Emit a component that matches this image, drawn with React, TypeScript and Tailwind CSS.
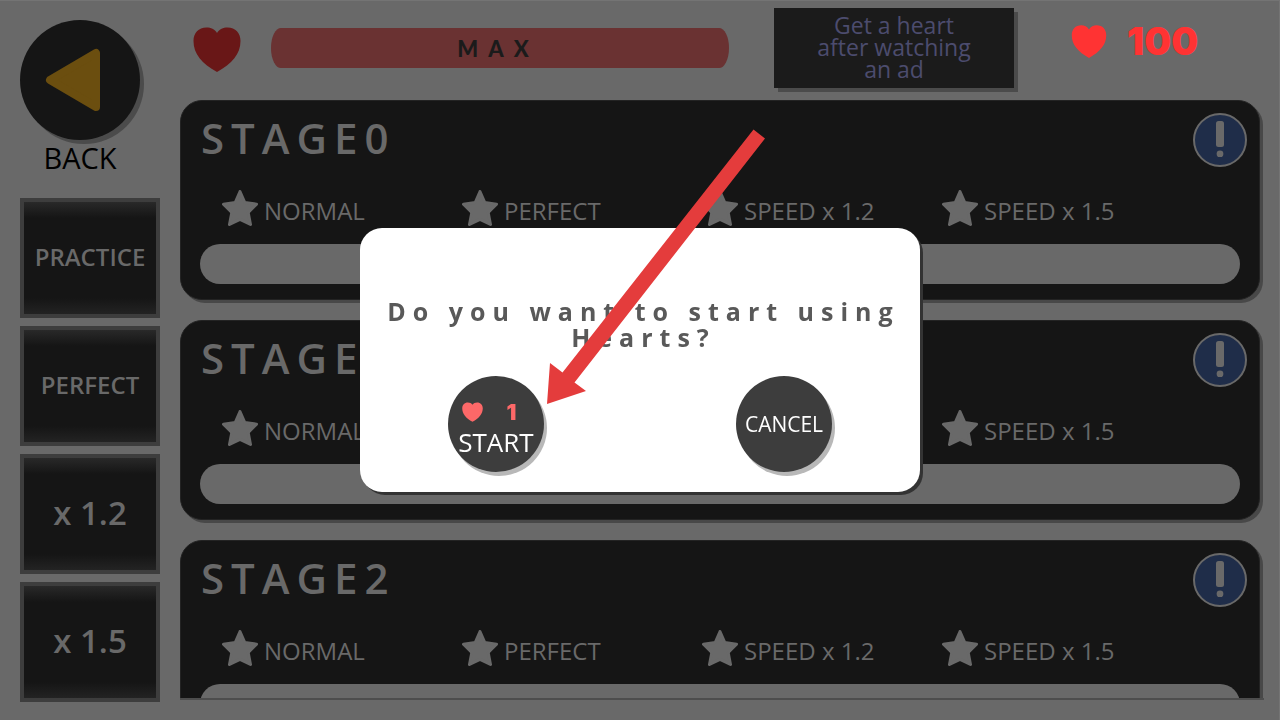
import { useState } from "react";

const modes = [
  { label: "PRACTICE", size: "text-[24px]" },
  { label: "PERFECT", size: "text-[24px]" },
  { label: "x 1.2", size: "text-[33px]" },
  { label: "x 1.5", size: "text-[33px]" },
];

const goals = ["NORMAL", "PERFECT", "SPEED x 1.2", "SPEED x 1.5"];

const stages = ["STAGE0", "STAGE1", "STAGE2"];

function Heart({ className }: { className: string }) {
  return (
    <svg viewBox="0 0 48 45" className={className} fill="currentColor">
      <path d="M24 6C21.500 2 18 .5 13.500 .5 5.500 .5 .5 6 .5 14 .5 27 9 36.500 24 45 39 36.500 47.500 27 47.500 14 47.500 6 42.500 .5 34.500 .5 30 .5 26.500 2 24 6Z" />
    </svg>
  );
}

function Star() {
  return (
    <svg
      viewBox="0 0 36 36"
      className="size-9 shrink-0"
      fill="currentColor"
      stroke="currentColor"
      strokeWidth="3"
      strokeLinejoin="round"
    >
      <path d="M18 1.500 22.800 12.500 34.500 14.200 26.200 22.500 28.500 34.500 18 29.300 7.500 34.500 9.800 22.500 1.500 14.200 13.200 12.500Z" />
    </svg>
  );
}

function Sidebar() {
  return (
    <nav className="flex w-[140px] shrink-0 flex-col pt-5">
      <button
        aria-labelledby="back-label"
        className="flex size-[120px] cursor-pointer items-center justify-center rounded-full bg-[#151515] shadow-[4px_4px_0_#4b4b4b]"
      >
        <svg
          viewBox="0 0 56 64"
          className="mr-3.5 h-16 w-14"
          fill="#6b4e0f"
          stroke="#6b4e0f"
          strokeWidth="8"
          strokeLinejoin="round"
        >
          <path d="M5 32 51 5V59Z" />
        </svg>
      </button>
      <span
        id="back-label"
        className="w-[120px] text-center text-[29px] leading-9 text-black"
      >
        BACK
      </span>

      <div className="mt-[22px] flex flex-col gap-2">
        {modes.map((mode) => (
          <button
            key={mode.label}
            className={`flex h-[120px] cursor-pointer flex-col items-center justify-between border-4 border-[#3d3d3d] bg-[#151515] font-semibold ${mode.size}`}
          >
            <span className="h-4 w-full bg-linear-to-b from-[#292929] to-[#151515]" />
            <span className="pb-0.5 leading-8">{mode.label}</span>
            <span className="h-4 w-full bg-linear-to-t from-[#232323] to-[#151515]" />
          </button>
        ))}
      </div>
    </nav>
  );
}

function Header() {
  return (
    <header className="flex h-[100px] shrink-0 items-center pr-[62px] pb-1 pl-[13px]">
      <Heart className="mt-0.5 h-[45px] w-12 text-[#691717]" />
      <div
        role="progressbar"
        aria-label="Hearts"
        aria-valuenow={100}
        className="ml-[30px] flex h-10 flex-1 items-center justify-center rounded-[10px/20px] bg-[#6a3232] pr-1 font-['Lato'] text-[22px] font-black tracking-[10px] text-[#1b1b1b]"
      >
        MAX
      </div>
      <button className="ml-[45px] h-20 w-60 cursor-pointer bg-[#1b1b1b] px-8 pb-0.5 text-[23px] leading-[22px] text-[#4c4c6e] shadow-[4px_4px_0_#4b4b4b]">
        Get a heart after watching an ad
      </button>
      <div className="ml-[57px] flex items-center gap-5 pb-3.5 text-[#ff3333]">
        <Heart className="h-[33px] w-9" />
        <span className="w-[75px] font-['Inter'] text-[38px] leading-8 font-black">
          100
        </span>
      </div>
    </header>
  );
}

function StageCard({ name }: { name: string }) {
  return (
    <section className="rounded-[22px] border border-[#232323] bg-[#151515] shadow-[3px_3px_0_#484848]">
      <div className="flex items-start justify-between pt-3 pr-3 pl-5">
        <h2 className="text-[42px] leading-[50px] font-semibold tracking-[7px]">
          {name}
        </h2>
        <button
          aria-label={`${name} info`}
          className="flex size-[54px] cursor-pointer items-center justify-center rounded-full border-2 border-[#696969] bg-[#1f2d49] pb-0.5"
        >
          <svg viewBox="0 0 8 36" className="h-9 w-2" fill="#696969">
            <rect width="8" height="26" rx="2.500" />
            <circle cx="4" cy="33" r="3.400" />
          </svg>
        </button>
      </div>
      <ul className="mt-[23px] grid grid-cols-4 pr-[77px] pl-[41px]">
        {goals.map((goal) => (
          <li key={goal} className="flex items-end gap-1.5">
            <Star />
            <span className="text-[24px] leading-[30px] font-medium whitespace-nowrap">
              {goal}
            </span>
          </li>
        ))}
      </ul>
      <div
        role="progressbar"
        aria-label={`${name} progress`}
        aria-valuenow={0}
        className="mx-[19px] mt-[18px] mb-[15px] h-10 rounded-[20px] bg-[#696969]"
      />
    </section>
  );
}

function StartDialog({ onClose }: { onClose: () => void }) {
  return (
    <div className="fixed inset-0 flex items-center justify-center">
      <div
        role="dialog"
        aria-labelledby="dialog-title"
        className="relative h-[264px] w-[560px] rounded-[22px] bg-white pt-[70px] shadow-[3px_3px_0_#333333]"
      >
        <p
          id="dialog-title"
          className="pl-[7px] text-center text-[25px] leading-[26px] font-bold tracking-[7px] text-[#595959]"
        >
          Do you want to start using Hearts?
        </p>
        <div className="mt-[26px] flex justify-center gap-48">
          <button
            onClick={onClose}
            className="flex size-24 cursor-pointer flex-col items-center rounded-full bg-[#3d3d3d] pt-6 text-white shadow-[3px_4px_0_#b8b8b8]"
          >
            <span className="flex items-center gap-6 pr-3.5 text-[#fd6868]">
              <Heart className="h-5 w-[21px]" />
              <span className="font-['Inter'] text-[22px] leading-6 font-black">
                1
              </span>
            </span>
            <span className="text-[26px] leading-9">START</span>
          </button>
          <button
            onClick={onClose}
            className="flex size-24 cursor-pointer items-center justify-center rounded-full bg-[#3d3d3d] pt-0.5 text-[21px] text-white shadow-[3px_4px_0_#b8b8b8]"
          >
            CANCEL
          </button>
        </div>

        {/* pointer to the start button */}
        <svg
          viewBox="0 0 218 275"
          className="pointer-events-none absolute -top-[99px] left-[187px] h-[275px] w-[218px]"
          fill="#e43c3c"
        >
          <path d="M0 275 3 234 15.500 243.500 206.500 .5 218 9.500 27.500 253.500 39 262Z" />
        </svg>
      </div>
    </div>
  );
}

export default function App() {
  const [open, setOpen] = useState(true);

  return (
    <div className="flex h-screen gap-5 overflow-hidden bg-[#696969] pl-5 font-['Open_Sans',sans-serif] text-[#696969] shadow-[inset_-1px_1px_0_#747474]">
      <Sidebar />
      <main className="flex min-w-0 flex-1 flex-col pr-4 pb-5">
        <Header />
        <div className="flex min-h-0 flex-1 flex-col gap-5 overflow-hidden border-b-2 border-[#4d4d4d] pr-1">
          {stages.map((stage) => (
            <StageCard key={stage} name={stage} />
          ))}
        </div>
      </main>
      {open && <StartDialog onClose={() => setOpen(false)} />}
    </div>
  );
}
